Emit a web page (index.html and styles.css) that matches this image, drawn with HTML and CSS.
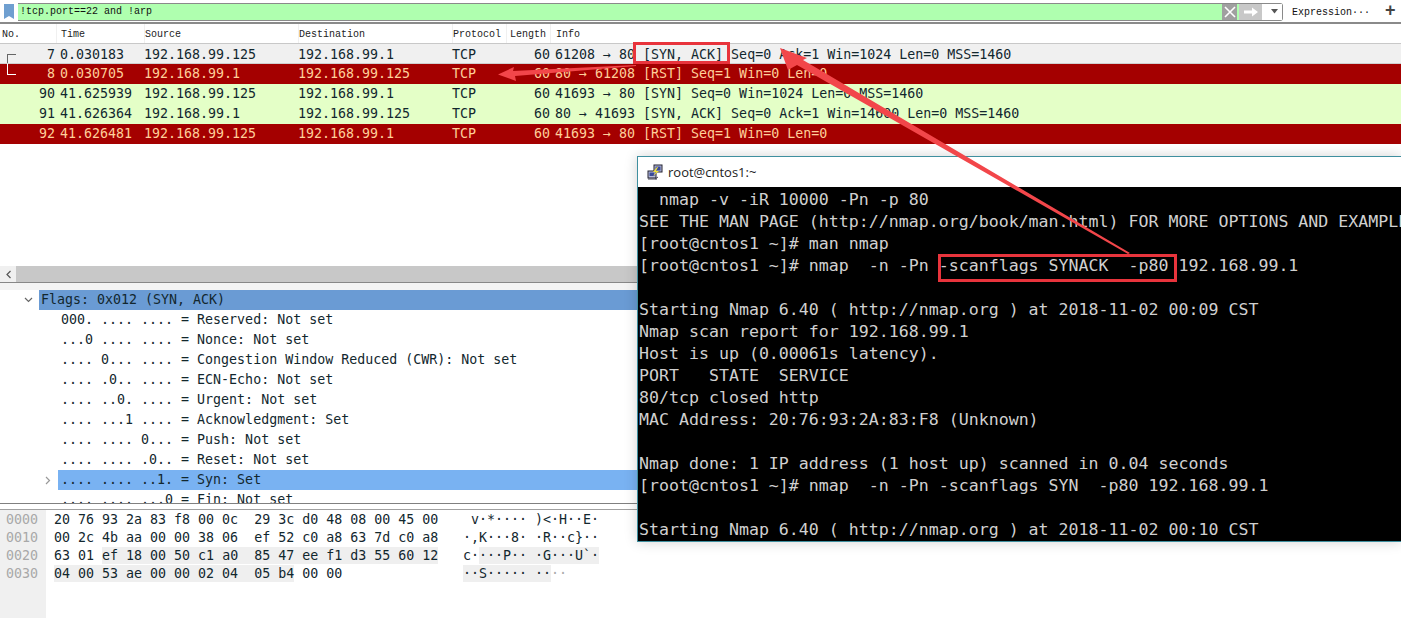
FILE: index.html
```html
<!DOCTYPE html>
<html lang="en">
<head>
<meta charset="utf-8">
<title>Wireshark capture with nmap terminal</title>
<link rel="stylesheet" href="styles.css">
</head>
<body>
<div class="app">
  <div class="filterbar">
    <svg class="bookmark" width="12" height="16" viewBox="0 0 12 16"><path d="M1 0h10v15L6 12l-5 3z" fill="#6f9fd0"/></svg>
    <div class="filter">
      <span class="filter-text">!tcp.port==22 and !arp</span>
      <span class="btn-x"><svg width="14" height="14" viewBox="0 0 14 14"><path d="M2 2l10 10M12 2L2 12" stroke="#fff" stroke-width="1.6"/></svg></span>
      <span class="btn-go"><svg width="22" height="14" viewBox="0 0 22 14"><path d="M4 5.5h8V2.5L18 7l-6 4.500V8.500H4z" fill="#fff"/></svg></span>
      <span class="btn-drop"><svg width="7" height="5" viewBox="0 0 7 5"><path d="M0 0h7L3.500 4.500z" fill="#555"/></svg></span>
    </div>
    <span class="expression">Expression···</span>
    <span class="plus">+</span>
  </div>

  <div class="packets">
    <div class="row head"><span class="c-no">No.</span><span>Time</span><span>Source</span><span>Destination</span><span>Protocol</span><span class="c-len">Length</span><span>Info</span></div>
    <div class="row sel"><span class="c-no">7</span><span>0.030183</span><span>192.168.99.125</span><span>192.168.99.1</span><span>TCP</span><span class="c-len">60</span><span>61208 → 80 [SYN, ACK] Seq=0 Ack=1 Win=1024 Len=0 MSS=1460</span><i class="tree tree-top"></i></div>
    <div class="row rst"><span class="c-no">8</span><span>0.030705</span><span>192.168.99.1</span><span>192.168.99.125</span><span>TCP</span><span class="c-len">60</span><span>80 → 61208 [RST] Seq=1 Win=0 Len=0</span><i class="tree tree-bottom"></i></div>
    <div class="row syn"><span class="c-no">90</span><span>41.625939</span><span>192.168.99.125</span><span>192.168.99.1</span><span>TCP</span><span class="c-len">60</span><span>41693 → 80 [SYN] Seq=0 Win=1024 Len=0 MSS=1460</span></div>
    <div class="row syn"><span class="c-no">91</span><span>41.626364</span><span>192.168.99.1</span><span>192.168.99.125</span><span>TCP</span><span class="c-len">60</span><span>80 → 41693 [SYN, ACK] Seq=0 Ack=1 Win=14600 Len=0 MSS=1460</span></div>
    <div class="row rst"><span class="c-no">92</span><span>41.626481</span><span>192.168.99.125</span><span>192.168.99.1</span><span>TCP</span><span class="c-len">60</span><span>41693 → 80 [RST] Seq=1 Win=0 Len=0</span></div>
  </div>

  <div class="hscroll"><span class="hscroll-btn"><svg width="7" height="9" viewBox="0 0 7 9"><path d="M5.500 1L2 4.500 5.500 8" fill="none" stroke="#555" stroke-width="1.200"/></svg></span></div>

  <div class="details">
    <div class="d-row d-flags"><svg class="chev chev-down" width="9" height="6" viewBox="0 0 9 6"><path d="M1 1l3.500 3.500L8 1" fill="none" stroke="#666" stroke-width="1.200"/></svg><span class="d-bar">Flags: 0x012 (SYN, ACK)</span></div>
    <div class="d-row"><span class="d-text">000. .... .... = Reserved: Not set</span></div>
    <div class="d-row"><span class="d-text">...0 .... .... = Nonce: Not set</span></div>
    <div class="d-row"><span class="d-text">.... 0... .... = Congestion Window Reduced (CWR): Not set</span></div>
    <div class="d-row"><span class="d-text">.... .0.. .... = ECN-Echo: Not set</span></div>
    <div class="d-row"><span class="d-text">.... ..0. .... = Urgent: Not set</span></div>
    <div class="d-row"><span class="d-text">.... ...1 .... = Acknowledgment: Set</span></div>
    <div class="d-row"><span class="d-text">.... .... 0... = Push: Not set</span></div>
    <div class="d-row"><span class="d-text">.... .... .0.. = Reset: Not set</span></div>
    <div class="d-row d-syn"><svg class="chev chev-right" width="6" height="9" viewBox="0 0 6 9"><path d="M1 1l3.500 3.500L1 8" fill="none" stroke="#999" stroke-width="1.200"/></svg><span class="d-sel">.... .... ..1. = Syn: Set</span></div>
    <div class="d-row"><span class="d-text">.... .... ...0 = Fin: Not set</span></div>
  </div>

  <div class="bytes">
    <div class="offsets">0000
0010
0020
0030</div>
    <div class="hex">20 76 93 2a 83 f8 00 0c  29 3c d0 48 08 00 45 00
00 2c 4b aa 00 00 38 06  ef 52 c0 a8 63 7d c0 a8
63 01 <b>ef 18 00 50 c1 a0  85 47 ee f1 d3 55 60 12</b>
<b>04 00 53 ae 00 00 02 04  05 b4</b> 00 00</div>
    <div class="ascii"> v·*···· )&lt;·H··E·
·,K···8· ·R··c}··
c·<b>···P·· ·G···U`·</b>
<b>··S····· ··</b><span class="faded">··</span></div>
  </div>
</div>

<div class="term">
  <div class="term-title">
    <svg width="16" height="16" viewBox="0 0 16 16">
      <rect x="7" y="1" width="8" height="7" fill="#b8bcd8" stroke="#223" stroke-width="1"/>
      <rect x="8.500" y="2.500" width="5" height="4" fill="#3a4a9a"/>
      <rect x="1" y="7" width="8" height="7" fill="#b8bcd8" stroke="#223" stroke-width="1"/>
      <rect x="2.500" y="8.500" width="5" height="3.500" fill="#3a4a9a"/>
      <path d="M1 15h9M8 15l3-2" stroke="#445" stroke-width="1"/>
      <path d="M10 3L6 8h3l-3 4 6-5H9l2-4z" fill="#f2e23a"/>
    </svg>
    <span>root@cntos1:~</span>
  </div>
  <pre class="term-body">  nmap -v -iR 10000 -Pn -p 80
SEE THE MAN PAGE (http://nmap.org/book/man.html) FOR MORE OPTIONS AND EXAMPLES
[root@cntos1 ~]# man nmap
[root@cntos1 ~]# nmap  -n -Pn -scanflags SYNACK  -p80 192.168.99.1

Starting Nmap 6.40 ( http://nmap.org ) at 2018-11-02 00:09 CST
Nmap scan report for 192.168.99.1
Host is up (0.00061s latency).
PORT   STATE  SERVICE
80/tcp closed http
MAC Address: 20:76:93:2A:83:F8 (Unknown)

Nmap done: 1 IP address (1 host up) scanned in 0.04 seconds
[root@cntos1 ~]# nmap  -n -Pn -scanflags SYN  -p80 192.168.99.1

Starting Nmap 6.40 ( http://nmap.org ) at 2018-11-02 00:10 CST</pre>
</div>

<svg class="annot" width="1401" height="618" viewBox="0 0 1401 618">
  <rect x="634.500" y="43.500" width="94" height="19" fill="none" stroke="#e8343c" stroke-width="3"/>
  <rect x="939.500" y="255.500" width="236" height="25" fill="none" stroke="#e8343c" stroke-width="3"/>
  <path d="M636 65L513 71 514 67 498 74.500 516 81 515 76 636 66z" fill="#f2464a"/>
  <path d="M1130 253L803 60 807 58 780 48 788 70 797 65 1128 254z" fill="#f2464a"/>
</svg>
</body>
</html>
```
FILE: styles.css
```css
* { box-sizing: border-box; }
html, body { margin: 0; padding: 0; height: 100%; background: #fff; overflow: hidden; }
body { position: relative; width: 1401px; height: 618px; }

.app {
  display: flex;
  flex-direction: column;
  height: 618px;
  font-family: "DejaVu Sans Mono", "Liberation Mono", monospace;
  font-size: 13.3px;
  color: #12272e;
}

/* filter bar */
.filterbar {
  display: flex;
  align-items: center;
  height: 24px;
  padding: 2px 0 0 3px;
  background: #fff;
  border-bottom: 2px solid #8a8a8a;
  flex: none;
}
.bookmark { flex: none; margin-right: 3px; }
.filter {
  flex: none;
  width: 1265px;
  height: 18px;
  display: flex;
  align-items: center;
  background: #afffaf;
  border: 1px solid #8a8a8a;
  border-width: 1px 1px 1px 0;
  border-radius: 0 3px 3px 0;
  margin-top: -1px;
}
.filter-text {
  font-family: "Liberation Mono", monospace;
  font-size: 10px;
  color: #111;
  padding-left: 2px;
  flex: 1;
}
.btn-x {
  display: flex; align-items: center; justify-content: center;
  width: 15px; height: 16px; background: #a0a0a0; margin-right: 2px;
}
.btn-go {
  display: flex; align-items: center; justify-content: center;
  width: 23px; height: 16px; background: #c8c8c8;
}
.btn-drop {
  display: flex; align-items: center; justify-content: center;
  width: 20px; height: 16px; background: #fff; padding-left: 5px;
}
.expression {
  font-family: "Liberation Mono", monospace;
  font-size: 10px;
  color: #111;
  margin-left: 9px;
  width: 93px;
}
.plus { font: bold 18px/18px "Liberation Sans", sans-serif; color: #444; margin-top: -4px; }

/* packet list */
.packets { flex: none; height: 240px; }
.row {
  position: relative;
  display: grid;
  grid-template-columns: 56px 88px 154px 154px 54px 44px 1fr;
  height: 20px;
  line-height: 20px;
  white-space: pre;
  overflow: hidden;
}
.row > span:nth-child(2) { padding-left: 4px; }
.row > span:nth-child(7) { padding-left: 5px; }
.c-no { text-align: right; padding-right: 1px; }
.c-len { text-align: right; }
.head {
  font-family: "Liberation Mono", monospace;
  font-size: 10px;
  line-height: 22px;
  color: #222;
  height: 20px;
  border-bottom: 1px solid #c8c8c8;
  background: #fff;
}
.head .c-no { text-align: left; padding-left: 2px; }
.head .c-len { text-align: left; padding-left: 3px; }
.head > span + span { border-left: 1px solid #f0f0f0; }
.sel { background: #f0f0f0; border-bottom: 1px solid #d0d0d0; padding-top: 1px; }
.rst { background: #a40000; color: #ffcf9a; }
.syn { background: #e4ffc7; }
.tree { position: absolute; left: 7px; display: block; width: 9px; border-left: 1px solid #666; }
.tree-top { top: 10px; height: 10px; border-top: 1px solid #666; }
.tree-bottom { top: 0; height: 11px; border-left-color: #fff; border-bottom: 1px solid #fff; }

.hscroll {
  flex: none;
  height: 17px;
  background: #c8c8c8;
  margin-top: 2px;
  border-bottom: 1px solid #888;
}
.hscroll-btn {
  display: flex; align-items: center; justify-content: center;
  width: 16px; height: 16px; background: #f0f0f0;
}

/* details */
.details {
  flex: none;
  height: 221px;
  overflow: hidden;
  border-top: 7px solid #f4f4f4;
  border-bottom: 1px solid #808080;
}
.d-row {
  display: flex;
  align-items: center;
  height: 20px;
  line-height: 20px;
  white-space: pre;
}
.d-text { padding-left: 61px; }
.d-flags { padding-left: 24px; }
.chev { flex: none; }
.d-bar { flex: 1; background: #6a9bd4; margin-left: 6px; padding-left: 2px; height: 20px; }
.d-syn { padding-left: 45px; }
.d-sel { flex: 1; background: #79b2f2; margin-left: 7px; padding-left: 3px; height: 20px; }

/* bytes */
.bytes {
  flex: 1;
  display: flex;
  margin-top: 5px;
  border-top: 1px solid #a0a0a0;
  line-height: 18px;
  white-space: pre;
}
.offsets {
  flex: none;
  width: 46px;
  background: #f0f0f0;
  color: #a8a8a8;
  padding: 1px 0 0 6px;
}
.hex { flex: none; width: 409px; padding: 1px 0 0 8px; }
.ascii { flex: 1; padding: 1px 0 0 8px; }
.bytes b { font-weight: normal; background: #efefef; padding: 1px 0; }
.faded { color: #aaa; }

/* terminal window */
.term {
  position: absolute;
  left: 637px;
  top: 156px;
  width: 764px;
  height: 386px;
  border: 1px solid #3f8f9f;
  border-right: 0;
  box-shadow: 0 0 12px rgba(0,0,0,.18);
  background: #000;
  overflow: hidden;
}
.term-title {
  display: flex;
  align-items: center;
  gap: 5px;
  height: 30px;
  padding-left: 9px;
  background: #fff;
  font: 13px "Open Sans", "Noto Sans", sans-serif;
  color: #222;
}
.term-body {
  margin: 0;
  padding: 2px 0 0 1px;
  font-family: "DejaVu Sans Mono", "Liberation Mono", monospace;
  font-size: 16.6px;
  line-height: 22px;
  color: #d0d0d0;
  white-space: pre;
}

.annot { position: absolute; left: 0; top: 0; pointer-events: none; }
```
